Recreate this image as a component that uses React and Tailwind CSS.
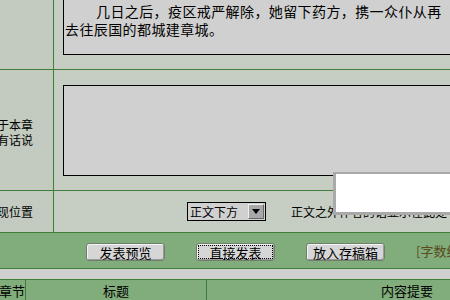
const font = { fontFamily: '"Noto Sans CJK SC", "Liberation Sans", sans-serif' }

const Btn = ({ children, focused }) => (
  <button
    className={
      'h-[18px] w-[79px] rounded-[3px] bg-[#d6d6d6] text-[13px] leading-none text-black border border-[#6f7f6c] shadow-[inset_1px_1px_0_#f4f4f4,inset_-1px_-1px_0_#9a9a9a] ' +
      (focused ? 'outline outline-1 outline-dotted outline-black -outline-offset-[3px]' : '')
    }
  >
    {children}
  </button>
)

export default function App() {
  return (
    <div className="w-[450px] h-[300px] overflow-hidden bg-[#c5ccc2] text-black" style={font}>
      {/* row 1: body text */}
      <div className="flex h-[70px] border-b border-[#3f7d3a]">
        <div className="w-[54px] shrink-0 border-r border-[#3f7d3a] bg-[#c3cbc0]" />
        <div className="flex-1 pl-[9px] bg-[#c6cdc3]">
          <div className="h-[55px] w-[420px] border border-t-0 border-r-0 border-black bg-[#d0d0d0] pl-[1px] pt-[2px] text-[14px] leading-[18px] tracking-[0.4px] whitespace-nowrap">
            <div className="pl-[31px]">几日之后，疫区戒严解除，她留下药方，携一众仆从再</div>
            <div>去往辰国的都城建章城。</div>
          </div>
        </div>
      </div>

      {/* row 2: author words */}
      <div className="flex h-[121px] border-b border-[#3f7d3a]">
        <div className="w-[54px] shrink-0 border-r border-[#3f7d3a] bg-[#c3cbc0] flex flex-col justify-center items-end pr-[20px] pt-[3px] text-[12px] leading-[15px] whitespace-nowrap">
          <div>于本章</div>
          <div>有话说</div>
        </div>
        <div className="flex-1 pl-[9px] pt-[15px] bg-[#c6cdc3]">
          <div className="h-[91px] w-[420px] border border-r-0 border-black bg-[#d0d0d0]" />
        </div>
      </div>

      {/* row 3: position */}
      <div className="relative flex h-[41px]">
        <div className="w-[54px] shrink-0 border-r border-[#3f7d3a] bg-[#c3cbc0] flex items-center justify-end pr-[20px] text-[12px] whitespace-nowrap">
          现位置
        </div>
        <div className="flex-1 flex items-center pl-[133px] bg-[#c6cdc3]">
          <div className="flex h-[19px] w-[79px] items-center border border-black bg-[#d0d0d0]">
            <span className="flex-1 pl-[2px] text-[12px] leading-none">正文下方</span>
            <span className="flex h-[15px] w-[16px] items-center justify-center mr-[1px] bg-[#a8a8a8] border border-[#eeeeee] border-r-[#666] border-b-[#666]">
              <span className="block h-0 w-0 border-x-[4px] border-t-[5px] border-x-transparent border-t-black" />
            </span>
          </div>
          <span className="ml-[25px] text-[12px] whitespace-nowrap">正文之外作者的话显示在此处</span>
        </div>
        <div className="absolute left-[333px] top-[-19px] h-[43px] w-[130px] border-[3px] border-t-[2px] border-[#a9a9a9] bg-white" />
      </div>

      {/* row 4: buttons */}
      <div className="flex h-[37px] items-center border-y border-[#3f7d3a] bg-[#80ad7b]">
        <div className="ml-[86px]"><Btn>发表预览</Btn></div>
        <div className="ml-[31px]"><Btn focused>直接发表</Btn></div>
        <div className="ml-[31px]"><Btn>放入存稿箱</Btn></div>
        <span className="ml-[31px] text-[13px] text-[#5b4a1e] whitespace-nowrap">[字数统计]</span>
      </div>

      <div className="h-[10px] bg-[#d0d0d0]" />

      {/* header row */}
      <div className="flex h-[22px] border-t border-[#3f7d3a] bg-[#80ad7b] text-[13px]">
        <div className="w-[26px] shrink-0 border-r border-[#3f7d3a] flex items-center justify-end whitespace-nowrap">章节</div>
        <div className="w-[181px] shrink-0 border-r border-[#3f7d3a] flex items-center justify-center">标题</div>
        <div className="flex-1 flex items-center pl-[174px] whitespace-nowrap">内容提要</div>
      </div>
    </div>
  )
}
